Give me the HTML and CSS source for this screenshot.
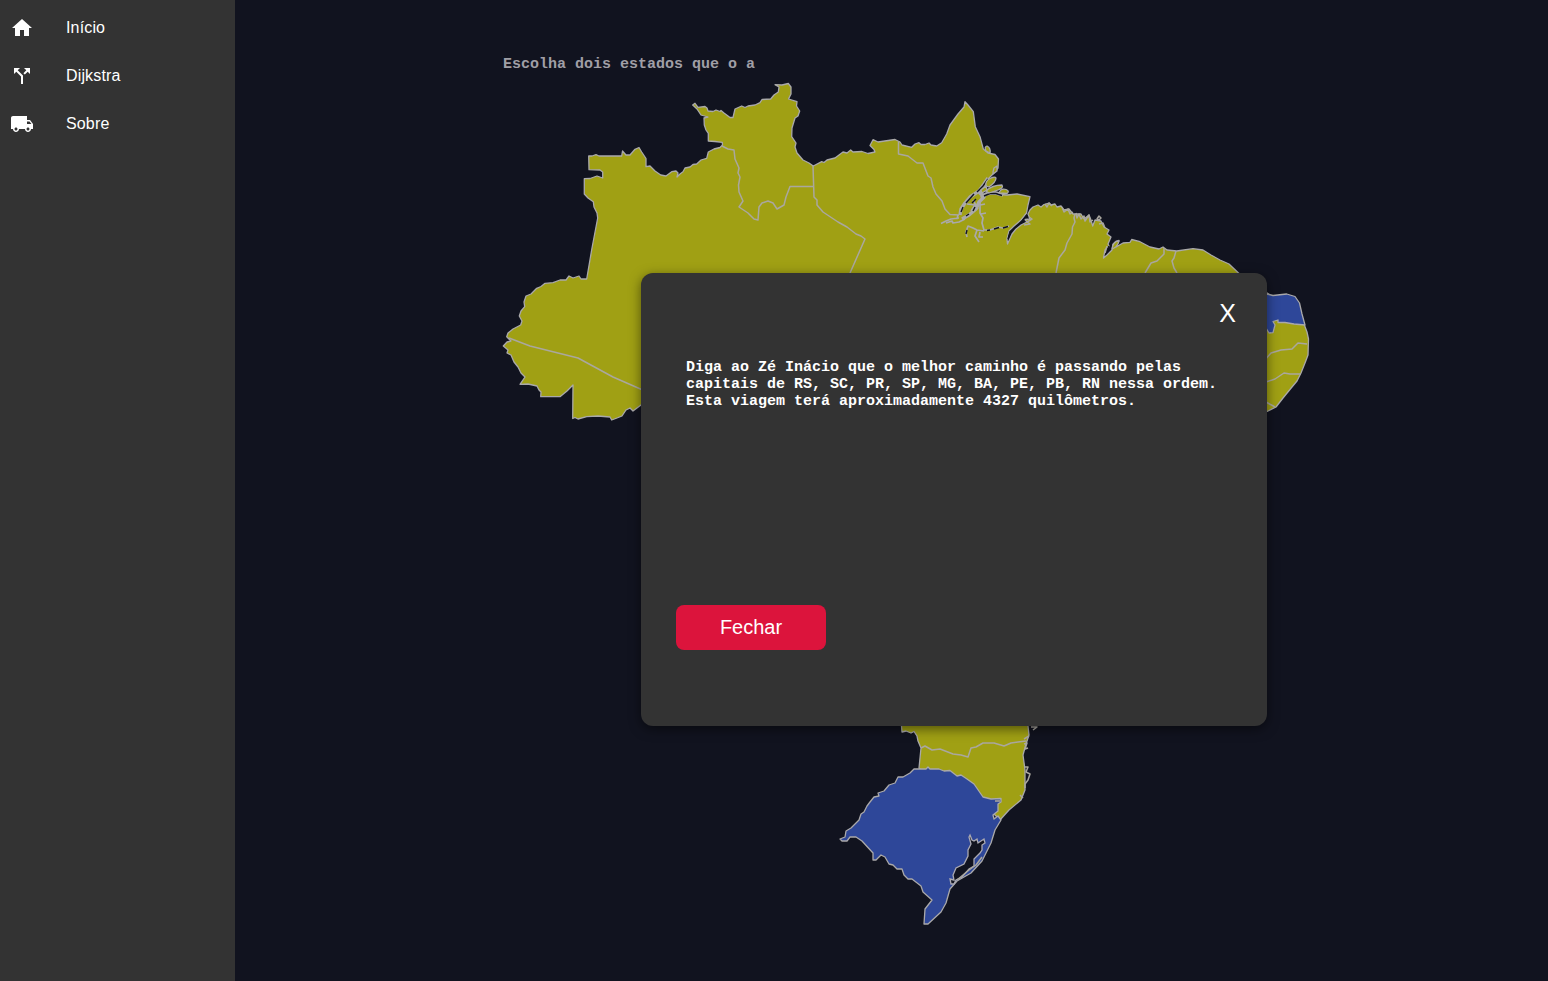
FILE: index.html
```html
<!DOCTYPE html>
<html lang="pt-BR">
<head>
<meta charset="utf-8">
<title>Dijkstra</title>
<link rel="stylesheet" href="styles.css">
</head>
<body>
<div class="app">
  <nav class="sidebar">
    <a class="nav-item"><svg class="icon" viewBox="0 0 24 24"><path d="M10 20v-6h4v6h5v-8h3L12 3 2 12h3v8z"/></svg><span>Início</span></a>
    <a class="nav-item"><svg class="icon" viewBox="0 0 24 24"><path d="M14 4l2.290 2.290-2.880 2.880 1.420 1.420 2.880-2.880L20 10V4zM10 4H4v6l2.290-2.290 4.710 4.700V20h2v-8.410l-5.290-5.300z"/></svg><span>Dijkstra</span></a>
    <a class="nav-item"><svg class="icon" viewBox="0 0 24 24"><path d="M20 8h-3V4H3c-1.100 0-2 .9-2 2v11h2c0 1.660 1.340 3 3 3s3-1.340 3-3h6c0 1.660 1.340 3 3 3s3-1.340 3-3h2v-5l-3-4zM6 18.500c-.83 0-1.500-.67-1.500-1.500s.67-1.500 1.500-1.500 1.500.67 1.500 1.500-.67 1.500-1.500 1.500zm13.500-9l1.960 2.500H17V9.500h2.500zm-1.500 9c-.83 0-1.500-.67-1.500-1.500s.67-1.500 1.500-1.500 1.500.67 1.500 1.500-.67 1.500-1.500 1.500z"/></svg><span>Sobre</span></a>
  </nav>
  <main class="content">
    <h1 class="title">Escolha dois estados que o a</h1>
    <svg class="map" viewBox="500 80 812 850">
      <!-- Country outline, north and centre -->
      <path class="state" d="M503.300 346L507 342L511 341L506.700 336.700L508 333L513 329L520.700 325L522 321L519.300 316L521 311L524.700 306.700L524 302L526 296L531 294L536.700 288.300L541 286.500L545 283.300L553 282.700L560 280L566 280L569 276L573 278L579 276L581 279L586.700 279L592 248L597.700 218L597 213L594 207L593.300 201.700L588 198L584.300 194L584.300 178.700L590 178.500L597 176L602.700 178L602.700 172L600 170L589 169.700L588.700 156L592 156L596 154.700L599 156L621.700 156L622.500 151L626 155L630 155L635 149.300L639 147.500L641.700 152L646 158.500L646 166.700L650 166L655 171L660.700 175L666 176L671.700 171.700L676 171L678 173L677 177L680 174L683 171.700L685 168L690 167L693 164.500L696.700 164L701 160L706.700 158.300L708.300 152L714 149L720 147.500L722.500 145L722.300 142.300L715 141.500L708.300 141L708.300 133.300L706 130L704.300 125L704 118L708 117L701 115L697 109L692.700 105L695 103.300L698 107.300L705 106.500L707 108L708 111L713 111.500L716 110L720 111.500L721 110.500L724 113L730 117.500L733 117.500L735 109L741.700 106L745 107.500L748 106L755 105L760 102.700L762 99.500L770.700 99L774 95L778.300 92L779 87L775 84.700L782 85L788.300 83.500L791 87L791 94L788.500 99L797 101.700L796.500 106L799.700 111L798 116L795 118L792 128L791.700 136.700L796 143L795 147L797 153L803 160L809 163L813.300 166L821.700 161.700L824 162.500L827 160L835 158L839 155L843 152L847 153L850.700 150L853 152L862 151.500L868 153.500L875 152L874 149.500L870 145.500L873 139.700L878 142L895 139.500L900 142L902 145L911.700 147.300L915 144L919 142.700L921 144.500L925 144.500L929 143L931 145L936.700 146L941.700 142.700L946.700 134L950 125L958 114L964 107L965 101.700L968 105L973.300 111.700L975.300 126.700L980 136.700L983.300 149L988 153L995 154.500L998.500 159L998 168L994 173L989 178L985 186L981 194L993 194L1007 195L1017 194L1030 196.700L1028 205L1026.500 213L1021 220L1014 226L1009 231L1007 239L1007.500 244L1012 234L1016 229L1021 225L1027 222L1025 219.500L1030 219L1028 214L1030 210L1033 207L1038 205L1041 207L1044 204.500L1049 203L1051 205L1055 204L1057 207L1061 206L1064 210L1069 209L1073 214L1081 214L1084 219L1089 215L1091 220L1092.700 226L1095 220L1101 221L1104 227L1109 230L1107 234L1111 237L1108 244L1109 246L1105 250L1103.500 258L1107 255L1112 250L1113 244L1119 241L1116 247L1123 243L1130 242.300L1131.700 239.500L1140 241.700L1150 247L1159 249L1163 247L1167 250L1176.700 251L1193 248.700L1203 250L1211 255L1220 260L1229 264L1238.500 273L1270 295L1298 305L1304 324L1307 332L1308.500 339L1308 355L1305 363L1301 373L1297 381L1292 387L1283 398L1276 407L1266 412L1200 500L1030 600L920 560L810 430L641 405L633 411L630 408L626 410L622 416L617 418L611.700 420L610 417L598 416L586.700 416.700L578 419L575 417.500L572.700 418.500L573 385L567 391L560 396.700L540.700 396.700L541 392L539 390L537 386L528 384L520 384.300L525 377L521 373L518 367L514 362L511 355L507 353L508 350Z"/>
      <!-- Borders between northern states -->
      <path class="border" d="M509 338L530 346L578 358L613 377L645 391M722 146L728 149L734 150L735 159L739 168L738 173L740 177L738.500 185L739 192L743 201L739 207L748 213L754 219L758 220L759 207L762 203L768 201L773 203L777 209L784 205L786 197L790 186.500L814 186.500M813 166L814 197L817 200L817 205L823 212L838 222L847 227L856 234L861 236L865 239L850 273M898.500 142L898.500 154L908 156L917 163L923 163L928 176L931 178L933 187L936 194L942 201L945 209L950 214.500L959 215M1075 214L1074 218L1075 222L1072.500 227L1072 234L1067 243L1065 250L1059 258L1056 273M1164 248L1164 254L1157 261L1151 263L1148 268L1145 273M1176 251L1174 258L1172 261L1174 268L1177 273M1264 361L1271 353L1281 350L1292 349L1298 343L1307 344M1266 382L1275 379L1284 373L1290 374L1301 374M1266 402L1275 407"/>
      <!-- Amazon delta: banks, then the water between them -->
      <path class="bank thick" d="M988 178L984 184L979 191L970 197L965 203L961 209L960 215M979 192L984 197L979 202L976 209L969 215L962 219M981 198L986 194L994 192.500L1003 195"/>
      <path class="bank" d="M941 223.500L946 221L951 219L959 218M946 223L952 221L953 223L959 222L965 219M958 215L957 219M967 204L975 205L971 211M973 200L978 209M980 200L980 213L983 218L982 223L984 230M980 205L985 204M981 214L986 213M967 237L966 232L968 226L973 228L977 230L984 231M977 230L975 236L979 242M980 232L979 237L983 237M984 230L990 230L998 227L1003 228L1009 226"/>
      <path class="water" d="M988 179L983 186L977 192M974 194L966 203M963 207L961 212M984 196L990 193.500L996 193.500L1002 195.500M976 199L972 203M975 207L973 211M969 214L966 216M987 230.500L990 230M994 229L999 227.500M1003 228L1008 226.500M1008 239L1010 232L1017 226M1020 223.500L1027 215M967 230L966 234M1109 246L1106 252"/>
      <g class="state">
        <path d="M986 186Q985 181 990 178.500T996 178Q996 182 989 187Z"/>
        <path d="M986 191Q992 185 1002 185Q1004 188 998 190L989 193Z"/>
        <path d="M999 193Q1001 188 1006 189.500Q1010 191 1007 193.500Z"/>
        <path d="M986 151Q984 147 987 146Q991 148 990 153Z"/>
        <path d="M993 172L994 168L997 166L997 171L993 174Z"/>
        <path d="M981 190L986 186L987 190L982 193Z"/>
        <path d="M1112 249Q1113 241 1119 240.500Q1118 246 1114 248Z"/>
      </g>
      <path class="border" d="M1076 213l1 5 2 -4 2 5 3 -3 1 5 4 -6 1 7 3 -2M1097 219l2 -3 2 2 -2 2zM1099 224l4 -1 2 5M1062 207l2 5 4 -3 2 5 3 -2M1029 217l3 2 -5 3 3 2 -6 1M1045 204l2 3 2 -4 3 3M1107 246l-2 7"/>
      <!-- Rio Grande do Norte -->
      <path class="state selected" d="M1255 294L1267 294L1273 295.500L1286.700 294L1295 296.500L1299.500 303L1302 314L1305 325L1294 324L1285 322.500L1278 322.500L1278 320L1273 321.500L1275 325L1273 332.700L1269 333L1266 328L1255 320Z"/>
      <!-- Paraná and Santa Catarina -->
      <path class="state" d="M895 700L901.500 726L902 732L906 731L911 733L914 731.500L917 736L918 741L921 748L919 768L930 780L980 800L1000 820L1009 810L1021 800L1025 790L1025 770L1023 755L1026 744L1029 735L1028 726L1020 700Z"/>
      <path class="border" d="M921 748L925 746L932 750L940 749L953 754L961 755L968 757L971 748L976 747L983 743L994 743L1004 746L1011 743L1026 741M1029 736L1024 739M1031 727L1037 727L1033 730M1024 744L1027 743L1025 749L1028 748M1025 767L1028 767L1026 772L1030 774L1028 780L1025 784L1025 788M1020 795L1023 798"/>
      <!-- Rio Grande do Sul -->
      <path class="state selected" d="M840 839L845 837L846 831L851 828L859 820L861 814L864 812L867 806L870 802L874 797L879 796L878 793L884 791L889 785L895 783L898 777L903 777L910 773L914 769L926 769L928 767L930 769L939 769L944 771L950 770.500L957 776L961 775L967 779L974 784L983 797L991 799L1001 798.500L1001 802L998 804L998 811L993 815L994 819L998 816L1001 820L995 830L991 843L982 861L971 873L957 881L950 889L946 903L941 912L928 924L924 924L925 909L932 900L923 892L921 886L912 879L908 879L904 875L902 869L897 869L893 865L889 864L885 857L881 855L876 860L873 860L873 853L862 841L856 837L850 837L847 841L842 841Z"/>
      <path class="lagoon" d="M970 835L972 840L974 841L977 839L978 843L984 839L985 843L982 845L982 850L980 853L974 859L974 866L969 869L962 877L956 880L954 884L951 884L950 879L954 880L953 875L956 868L964 864L968 856L968 850L971 844L969 837Z"/>
      <path class="border" d="M1000 801L995 801M957 880L969 870L976 865L982 857"/>
    </svg>
  </main>
</div>
<section class="modal">
  <button class="modal-x">X</button>
  <p class="modal-text">Diga ao Zé Inácio que o melhor caminho é passando pelas capitais de RS, SC, PR, SP, MG, BA, PE, PB, RN nessa ordem. Esta viagem terá aproximadamente 4327 quilômetros.</p>
  <button class="modal-close">Fechar</button>
</section>
</body>
</html>
```

FILE: styles.css
```css
* { box-sizing: border-box; }
body { margin: 0; background: #11131f; font-family: "Liberation Sans", Arial, sans-serif; overflow: hidden; }
.app { display: flex; height: 981px; }
.sidebar { width: 235px; flex: none; background: #333; padding-top: 4px; }
.nav-item { display: flex; align-items: center; gap: 32px; height: 48px; padding-left: 10px; color: #fff; font-size: 16px; letter-spacing: 0.15px; }
.icon { width: 24px; height: 24px; fill: #fff; }
.content { flex: 1; display: flex; flex-direction: column; padding: 56px 0 0 265px; }
.title { margin: 0 0 7px 3px; font: bold 15px/17px "Liberation Mono", monospace; color: #a09fa6; }
.map { display: block; width: 812px; height: 850px; flex: none; }
.state { fill: #a0a014; stroke: #aaa9aa; stroke-width: 1.3; stroke-linejoin: round; }
.selected { fill: #2e4799; }
.border { fill: none; stroke: #aaa79f; stroke-width: 1.5; stroke-linejoin: round; }
.bank { fill: none; stroke: #aaa9aa; stroke-width: 1.700; stroke-linejoin: round; }
.thick { stroke-width: 3.400; }
.water { fill: none; stroke: #11131f; stroke-width: 1.400; }
.lagoon { fill: #11131f; stroke: #aaa9b2; stroke-width: 1.300; }
.modal { position: absolute; left: 641px; top: 273px; width: 626px; height: 453px; padding: 24px 24px 76px 35px; display: flex; flex-direction: column; align-items: flex-start; background: #333; border-radius: 12px; box-shadow: 0 3px 12px rgba(0, 0, 0, 0.5); color: #fff; }
.modal-x { align-self: flex-end; width: 31px; height: 32px; padding: 0; border: 0; background: none; color: #fff; font: 25px/32px "Liberation Sans", Arial, sans-serif; }
.modal-text { width: 540px; margin: 30px 0 0 10px; font: bold 15px/17px "Liberation Mono", monospace; }
.modal-close { width: 150px; height: 45px; margin-top: auto; padding: 0; border: 0; border-radius: 8px; background: #dc143c; color: #fff; font: 20px "Liberation Sans", Arial, sans-serif; }
```
